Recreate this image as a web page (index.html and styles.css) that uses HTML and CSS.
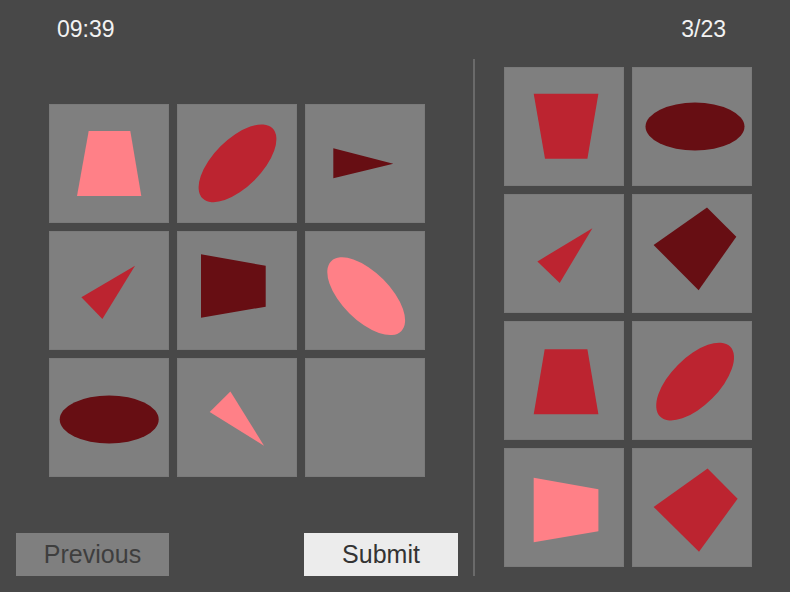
FILE: index.html
```html
<!DOCTYPE html>
<html>
<head>
<meta charset="utf-8">
<link rel="stylesheet" href="styles.css">
</head>
<body>
<div class="app">
  <div class="header">
    <span class="timer">09:39</span>
    <span class="counter">3/23</span>
  </div>
  <div class="main">
    <div class="left">
      <div class="grid grid3">
        <div class="tile"><svg viewBox="0 0 120 119"><polygon class="pink" points="39.7,27 81.3,27 92.3,92 28,92"/></svg></div>
        <div class="tile"><svg viewBox="0 0 120 119"><ellipse class="red" cx="60.5" cy="59.3" rx="49.5" ry="24" transform="rotate(-45 60.5 59.3)"/></svg></div>
        <div class="tile"><svg viewBox="0 0 120 119"><polygon class="dark" points="28.3,44.3 88.3,59.7 28.3,74.3"/></svg></div>
        <div class="tile"><svg viewBox="0 0 120 119"><polygon class="red" points="86,34.7 32.4,66.3 53.4,88"/></svg></div>
        <div class="tile"><svg viewBox="0 0 120 119"><polygon class="dark" points="24,23.3 88.7,34.7 88.7,75.7 24,86.7"/></svg></div>
        <div class="tile"><svg viewBox="0 0 120 119"><ellipse class="pink" cx="61.2" cy="65.2" rx="49.5" ry="24" transform="rotate(45 61.2 65.2)"/></svg></div>
        <div class="tile"><svg viewBox="0 0 120 119"><ellipse class="dark" cx="60.2" cy="61.5" rx="49.5" ry="24"/></svg></div>
        <div class="tile"><svg viewBox="0 0 120 119"><polygon class="pink" points="53.4,33.4 32.7,54 87,87.7"/></svg></div>
        <div class="tile"></div>
      </div>
      <div class="buttons">
        <button class="btn btn-prev">Previous</button>
        <button class="btn btn-submit">Submit</button>
      </div>
    </div>
    <div class="divider"></div>
    <div class="right">
      <div class="grid grid2">
        <div class="tile"><svg viewBox="0 0 120 119"><polygon class="red" points="29.7,26.7 94.4,26.7 83.4,91.8 41,91.8"/></svg></div>
        <div class="tile"><svg viewBox="0 0 120 119"><ellipse class="dark" cx="63" cy="59.6" rx="49.5" ry="24"/></svg></div>
        <div class="tile"><svg viewBox="0 0 120 119"><polygon class="red" points="88.4,34.2 33.4,67.4 55.7,89"/></svg></div>
        <div class="tile"><svg viewBox="0 0 120 119"><polygon class="dark" points="75,13.6 104.3,42.8 66.6,96.2 21.6,51"/></svg></div>
        <div class="tile"><svg viewBox="0 0 120 119"><polygon class="red" points="40.7,28.2 83.4,28.2 94.4,93.3 29.7,93.3"/></svg></div>
        <div class="tile"><svg viewBox="0 0 120 119"><ellipse class="red" cx="63.1" cy="60.6" rx="49.5" ry="24" transform="rotate(-45 63.1 60.6)"/></svg></div>
        <div class="tile"><svg viewBox="0 0 120 119"><polygon class="pink" points="29.7,29.8 94.4,41.2 94.4,83.2 29.7,94.2"/></svg></div>
        <div class="tile"><svg viewBox="0 0 120 119"><polygon class="red" points="75.6,20.6 105.6,50.7 67,103.8 21.6,58.9"/></svg></div>
      </div>
    </div>
  </div>
</div>
</body>
</html>
```
FILE: styles.css
```css
html, body {
  margin: 0;
  padding: 0;
  background: #484848;
}
body {
  font-family: "Liberation Sans", Arial, sans-serif;
}
.app {
  width: 790px;
  height: 592px;
  display: flex;
  flex-direction: column;
  overflow: hidden;
}
.header {
  height: 59px;
  box-sizing: border-box;
  padding: 17px 64px 0 57px;
  display: flex;
  justify-content: space-between;
  color: #f2f2f2;
  font-size: 23px;
  line-height: 25px;
}
.main {
  display: flex;
  height: 517px;
}
.left {
  width: 473px;
  display: flex;
  flex-direction: column;
}
.grid {
  display: grid;
  grid-auto-rows: 119px;
  column-gap: 8px;
  row-gap: 8px;
}
.grid3 {
  grid-template-columns: repeat(3, 120px);
  margin: 45px 0 0 49px;
}
.grid2 {
  grid-template-columns: repeat(2, 120px);
  margin: 8px 0 0 29px;
}
.tile {
  background: #7f7f7f;
  box-shadow: inset 0 0 0 1px #7a7a7a;
}
.tile svg {
  display: block;
  width: 120px;
  height: 119px;
}
.pink { fill: #ff8087; }
.red { fill: #bc2430; }
.dark { fill: #670e13; }
.buttons {
  display: flex;
  justify-content: space-between;
  padding: 0 15px 0 16px;
  margin-top: 56px;
}
.btn {
  width: 153px;
  height: 43px;
  border: none;
  margin: 0;
  padding: 0;
  font-family: "Liberation Sans", Arial, sans-serif;
  font-size: 25px;
  line-height: 43px;
}
.btn-prev {
  background: #7f7f7f;
  color: #3e3e3e;
}
.btn-submit {
  width: 154px;
  background: #ececec;
  color: #333333;
}
.divider {
  width: 2px;
  background: #6a6a6a;
}
```
